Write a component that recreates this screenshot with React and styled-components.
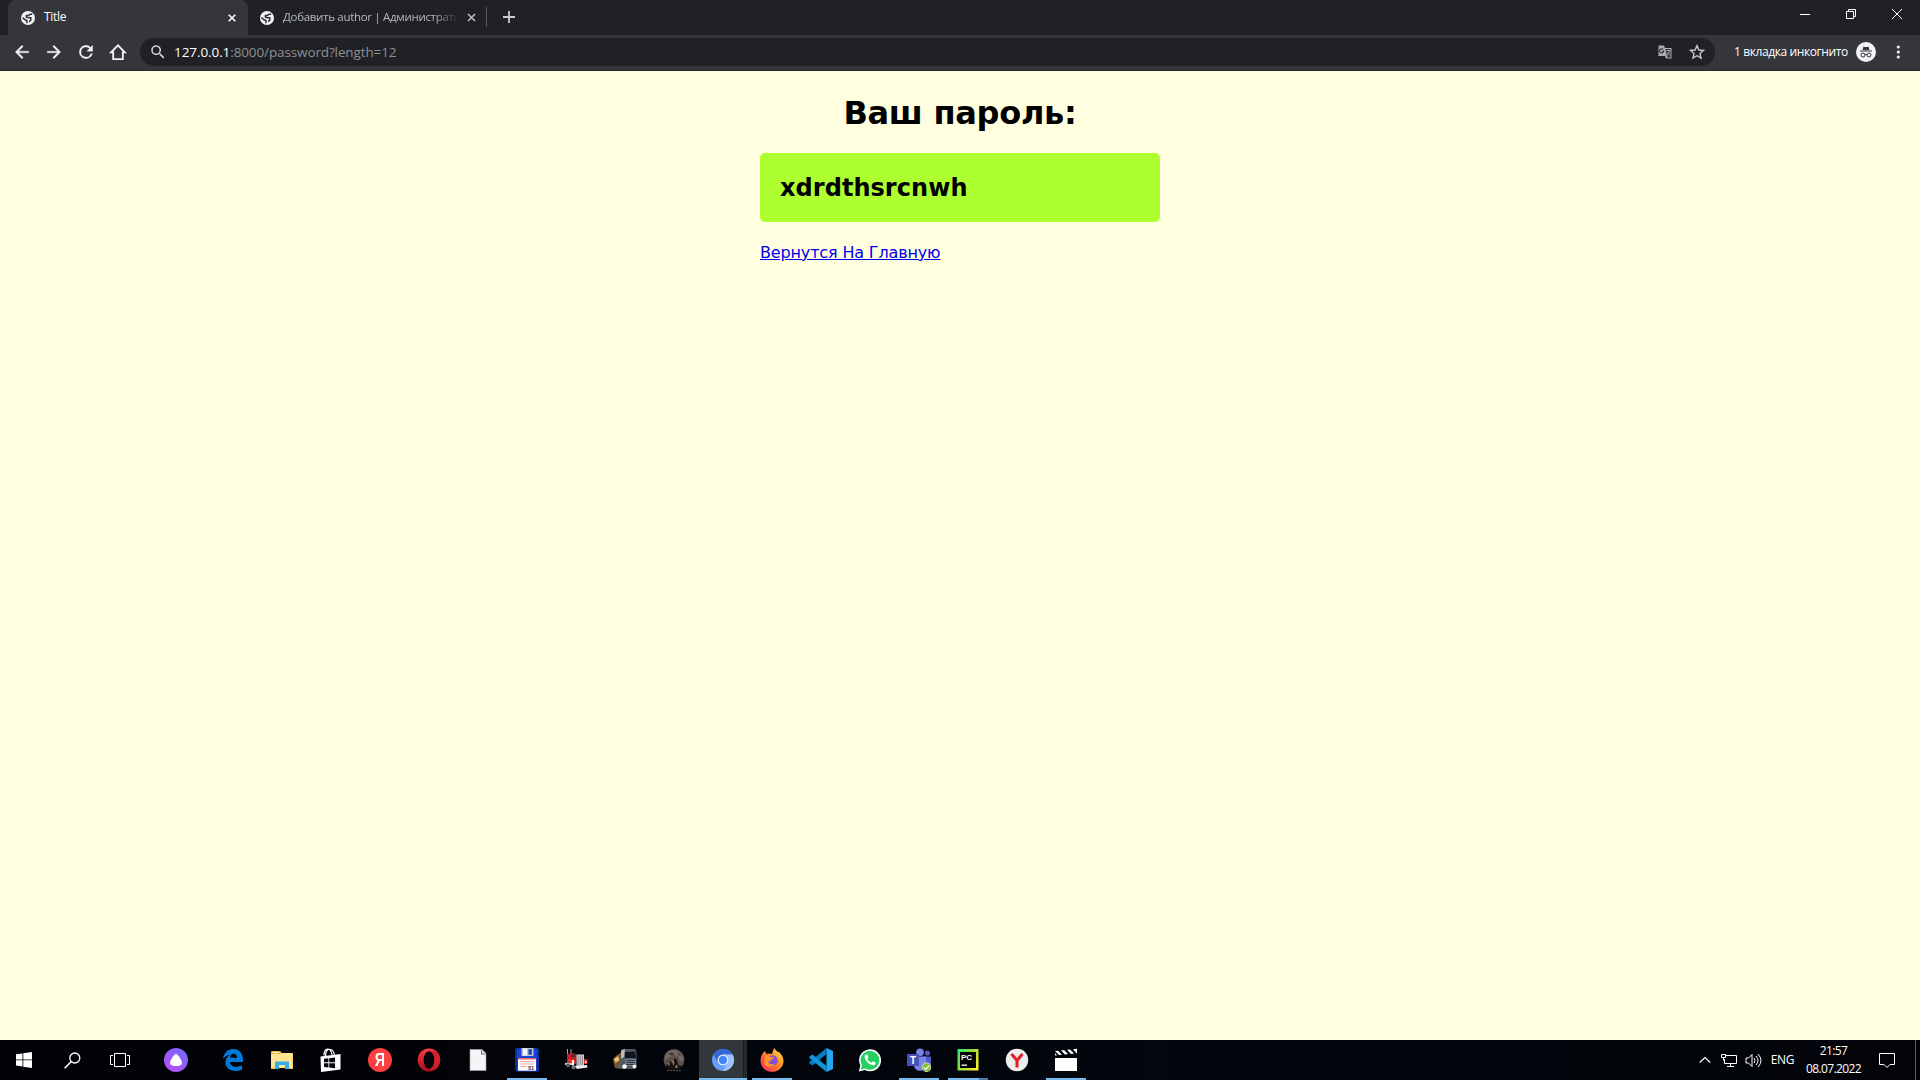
import React from "react";
import styled, { createGlobalStyle } from "styled-components";

const Global = createGlobalStyle`
  body { margin: 0; background: #ffffe0; overflow: hidden; }
`;
const Screen = styled.div`
  width: 1920px; height: 1080px; display: flex; flex-direction: column; background: #ffffe0;
`;
const TabStrip = styled.div`
  height: 35px; flex: none; background: #202124; display: flex; box-sizing: border-box; padding-left: 8px;
  font-family: "Open Sans", "Noto Sans", sans-serif; font-size: 12px;
`;
const Tab = styled.div`
  width: ${(p) => p.$w}px; box-sizing: border-box; height: 35px; flex: none; display: flex; align-items: center;
  padding: 0 ${(p) => p.$pr}px 0 ${(p) => p.$pl}px; color: ${(p) => (p.$active ? "#fff" : "#b4b8bd")};
  background: ${(p) => (p.$active ? "#35363a" : "transparent")}; border-radius: 8px 8px 0 0;
`;
const TabTitle = styled.span`
  flex: 1; min-width: 0; margin-left: 9px; padding-bottom: 2px; white-space: nowrap; line-height: 20px;
  font-size: ${(p) => p.$size}px; letter-spacing: ${(p) => p.$ls}px;
  ${(p) => p.$fade && "mask-image: linear-gradient(90deg, #000 86%, transparent 100%);"}
`;
const TabDivider = styled.i`
  width: 1px; height: 20px; background: #55575b; margin: 7px 15px 0 0;
`;
const NewTab = styled.div` padding-top: 10px; flex: 1; line-height: 0; `;
const WindowButtons = styled.div` display: flex; width: 138px; height: 28px; `;
const WinButton = styled.div` width: 46px; display: grid; place-items: center; `;
const Toolbar = styled.div`
  height: 36px; flex: none; box-sizing: border-box; background: #35363a; border-bottom: 1px solid #28292c;
  display: flex; align-items: center; padding: 0 0 1px 6px;
`;
const ToolButton = styled.div` width: 32px; height: 32px; flex: none; display: grid; place-items: center; `;
const Omnibox = styled.div`
  margin-left: 6px; width: 1575px; height: 28px; border-radius: 14px; background: #202124; box-sizing: border-box;
  display: flex; align-items: center; padding: 0 9px 0 9px; flex: none;
`;
const Url = styled.span`
  flex: 1; margin-left: 7px; color: #8d9094; font: 13.5px/20px "Open Sans", "Noto Sans", sans-serif; letter-spacing: -0.12px;
`;
const Host = styled.span` color: #fff; letter-spacing: -0.08px; `;
const OmniIcons = styled.div` display: flex; align-items: center; gap: 15px; `;
const Incognito = styled.div`
  margin-left: 19px; display: flex; align-items: center; color: #fff; white-space: nowrap;
  font: 12px/20px "Open Sans", "Noto Sans", sans-serif; letter-spacing: -0.4px;
`;
const IncognitoLabel = styled.span` width: 114px; margin-right: 8px; `;
const MenuDots = styled.div` margin-left: 12px; width: 20px; height: 20px; display: grid; place-items: center; `;
const Page = styled.main`
  flex: 1; font-family: Verdana, "DejaVu Sans", sans-serif; color: #000;
`;
const Column = styled.div` width: 400px; margin: 0 auto; `;
const Heading = styled.h1`
  margin: 23px 0 20px; font-size: 32px; line-height: 39px; text-align: center; letter-spacing: -0.27px;
  white-space: nowrap;
`;
const Password = styled.h2`
  margin: 0 0 21px; padding: 21px 20px 19px; height: 69px; box-sizing: border-box; line-height: 29px; font-size: 24px;
  letter-spacing: 0.05px; background: #adff2f; border-radius: 5px;
`;
const HomeLink = styled.a` color: #0000ee; font-size: 16px; line-height: 19px; letter-spacing: -0.15px; text-decoration: underline; `;
const Taskbar = styled.footer`
  height: 40px; flex: none; display: flex; color: #fff;
  background: linear-gradient(90deg, #010206, #02060d 60%, #020409);
`;
const taskBackground = (p) => {
  const layers = [];
  if (p.$split) layers.push("linear-gradient(#4a7ea8, #4a7ea8) 36px 100% / 9px 2px no-repeat");
  if (p.$line) layers.push(`linear-gradient(#76b9ed, #76b9ed) ${p.$active ? 0 : 5}px 100% / ${p.$line}px 2px no-repeat`);
  if (p.$active) layers.push("linear-gradient(90deg, #32373c 44px, #17191c 44px 45px, #25292d 45px)");
  return layers.join(", ") || "transparent";
};
const Task = styled.div`
  width: ${(p) => p.$w || 49}px; height: 40px; flex: none; box-sizing: border-box; display: grid; place-items: center;
  padding-left: ${(p) => (p.$w % 2 === 0 ? 0 : 1)}px; margin-left: ${(p) => p.$gap || 0}px;
  background: ${taskBackground};
`;
const Tray = styled.div`
  margin-left: auto; display: flex; align-items: center; font: 12px/18px "Open Sans", "Noto Sans", sans-serif; letter-spacing: -0.3px;
`;
const TrayItem = styled.div` width: ${(p) => p.$w}px; display: flex; justify-content: center; white-space: nowrap; `;
const Clock = styled.div` width: 67px; margin-right: 3px; text-align: center; white-space: nowrap; letter-spacing: -0.6px; `;
const ShowDesktop = styled.i` width: 4px; height: 40px; border-left: 1px solid #5b5d60; `;

const Svg = ({ s = 24, box = 24, children }) => (
  <svg width={s} height={s} viewBox={`0 0 ${box} ${box}`} fill="none">{children}</svg>
);
const Globe = () => (
  <Svg s={14} box={14}>
    <circle cx="7" cy="7" r="7" fill="#f1f3f4" />
    <path d="M11.300 3.200 9 3.300 7.600 4.600H5.400v1.600l2.200.6h2.200v2.300L8.200 10.700M1.500 6.600l2.700 2.200 1.700.7v2.700" stroke="#303134" strokeWidth="1.500" />
  </Svg>
);
const Close = ({ c }) => <Svg s={8} box={8}><path d="m.7.7 6.6 6.6m0-6.6L.7 7.3" stroke={c} strokeWidth="1.6" /></Svg>;
const arrow = "M20 11H7.83l5.59-5.59L12 4l-8 8 8 8 1.41-1.41L7.83 13H20z";

const Windows = () => <Svg s={16} box={16}><path fill="#fff" d="M0 2.3 6.5 1.4v6.1H0zM7.3 1.3 16 0v7.5H7.3zM0 8.3h6.5v6.2L0 13.6zM7.3 8.3H16V16l-8.7-1.3z" /></Svg>;
const Search = () => <Svg s={17} box={17}><circle cx="10.8" cy="6" r="5" stroke="#fff" strokeWidth="1.3" /><path d="M7.2 9.6.6 16.2" stroke="#fff" strokeWidth="1.5" /></Svg>;
const TaskView = () => <svg width="20" height="14" viewBox="0 0 20 14" fill="none" stroke="#fff"><path d="M4.5.5h11v13h-11zM3 2.5H.5v9H3M17 2.5h2.5v9H17" /></svg>;
const Alice = () => (
  <Svg><defs><linearGradient id="al" x1="1" y1="0" x2="0" y2="1"><stop stopColor="#6a6bff" /><stop offset="1" stopColor="#c14cf5" /></linearGradient></defs>
    <circle cx="12" cy="12" r="12" fill="url(#al)" /><path d="M12 6c1.800 0 6 6.200 6 8.900C18 17.200 14.500 18 12 18s-6-.8-6-3.100C6 12.200 10.200 6 12 6z" fill="#fff" /></Svg>
);
const Edge = () => <Svg><path fill="#0078d7" d="M2 11C2.800 4.500 7 1 12 1c6.500 0 10 4.800 10 10.500V14H9c.2 3.300 3 4.800 6.200 4.800 2.200 0 4.300-.6 5.800-1.500v4.200c-1.800 1-4 1.500-6.700 1.500C8.500 23 4.400 19.500 4.400 14.600c0-3.300 1.700-6.100 4.700-7.800C5.900 7.200 3.500 9 2 11zm7.100-1.200h6.800c0-2.500-1.200-4-3.300-4-1.900 0-3.100 1.500-3.500 4z" /></Svg>;
const Explorer = () => (
  <Svg><path d="M1 4q0-1 1-1h8l2 2h10q1 0 1 1v14H1z" fill="#e9b93f" /><path d="M1 6h9l2-1h10.500v15H1z" fill="#ffe394" /><path d="M2.500 4h6v1h-6z" fill="#fff" />
    <path d="M5 13.500h14V21h-4v-4H9v4H5z" fill="#35aee2" /><path d="M1 20h4v1H1zM19 20h4v1h-4z" fill="#e7bd52" /></Svg>
);
const Store = () => (
  <Svg><path d="m1.500 8.500 20-2.500v15.500L2 24z" fill="#fff" /><path d="M6.500 8c0-9 8-9 9 0M5 7.500C5-1 12-1 13 7" stroke="#fff" strokeWidth="1.200" />
    <path fill="#070a0f" d="M5 10.800 9.400 10.300v4H5zm5.200-.6 5.800-.7v4.800h-5.800zM5 15.200h4.400v4.200L5 18.900zm5.200 0H16v5l-5.800-.7z" /></Svg>
);
const YaText = styled.span`
  width: 24px; height: 24px; border-radius: 50%; background: #fc3f3f; color: #fff; text-align: center;
  font: bold 19px/24px "Liberation Sans", sans-serif;
`;
const Narrow = styled.span` display: inline-block; transform: scaleX(.75); `;
const Opera = () => (
  <Svg><defs><linearGradient id="op" x1="0" y1="0" x2="0" y2="1"><stop stopColor="#ff3a45" /><stop offset="1" stopColor="#a80c1b" /></linearGradient></defs>
    <ellipse cx="12" cy="12" rx="11.300" ry="11.500" fill="url(#op)" /><ellipse cx="12" cy="12" rx="5.300" ry="8.700" fill="#020408" /><path d="M13 3.200c3.500-1 6 0 7.800 2.800 2.900 4 2.700 9-.6 13-2 2.400-5 2.700-7.500 1.700 6.500-1 6.500-16.500.3-17.500z" fill="#d51e2e" /></Svg>
);
const FileIcon = () => <Svg><path d="M4 1.500h12l4 4v17H4z" fill="#f5f5f5" stroke="#aaa" strokeWidth=".6" /><path d="M15 1.500v5h5z" fill="#777" /><path d="M16 1.800v3.700h3.700z" fill="#ddd" /></Svg>;
const Floppy = () => (
  <Svg><path d="M.3 1Q.3.200 1.500.200h20.800l1.400 1.500V23.500H2L.3 22z" fill="#1644cf" /><path d="M1.500 1v22M22.500 2v21" stroke="#0a2b9d" />
    <path d="M6.500 0h12v8h-12z" fill="#b9c3d2" /><path d="M8 .5h4v7H8z" fill="#eff3f7" /><path d="M13.500 1.200h3.300v5.500h-3.300z" fill="#173eb9" />
    <path d="M3 10.500h18v12.200H3z" fill="#fff" /><path d="M3 10h18v1.500H3z" fill="#e66" /><path d="M5 13.500h14M5 16h14M5 18.500h7" stroke="#f08f8f" strokeWidth=".8" /><text x="13" y="21.500" fontSize="5" fontWeight="bold" fontFamily="Liberation Sans" fill="#333">S1</text></Svg>
);
const RedTruck = () => (
  <Svg><path d="M3.500 1v14M7 1v5" stroke="#a9a9a9" /><path d="M3 6 8 5l4 1 1 3-1 7H5l-2-2z" fill="#c41c20" /><path d="M7.500 6.500h4v2.500h-4z" fill="#3a3236" /><path d="m4 11 7 1v3l-7-1z" fill="#e8383a" />
    <path d="M1 15h9v2H1z" fill="#cfcfcf" /><circle cx="4" cy="17.500" r="2" fill="#55575a" /><circle cx="9.500" cy="19" r="2.200" fill="#74767a" />
    <path d="M12.500 6.500h7.500V18h-7.500z" fill="#d6d6d6" /><path d="M14 7.500v10M16.200 7.500v10M18.400 7.500v10" stroke="#777" strokeWidth=".9" /><path d="M20 11h3.500v5H20z" fill="#d32c30" /><path d="m11 18 12-1 .5 2.500L13 21z" fill="#eee" /><path d="M8 12h2v5H8zM21 13h1.500v2H21z" fill="#fff" /></Svg>
);
const GreyTruck = () => (
  <Svg><path d="M0 11 4 7l5-3v15l-8-2z" fill="#7d5528" /><path d="m1 11 4-3 1.500 4-4 3z" fill="#e8c075" /><path d="M8 3 10 1h12l1.500 2.500V18l-2 3H9l-2-3z" fill="#4c5763" /><path d="m8 2.500 4-1.500-1 8-3 2z" fill="#b9bcc0" /><path d="m12 4 10-.5 1 6.500H12z" fill="#11161d" />
    <path d="M12 11h11v7H12z" fill="#74818e" /><path d="M13 12.500h9M13 14.500h9M13 16.500h9" stroke="#2f3841" /><path d="m1 17 8 1v3l-7-1z" fill="#66594e" /><circle cx="11.500" cy="18.500" r="2.200" fill="#fff" /><circle cx="21.500" cy="18.500" r="2" fill="#fff7e0" /></Svg>
);
const Moon = () => (
  <Svg><circle cx="12" cy="11.500" r="10.500" fill="#5a514b" /><path d="M3 8 7 3l6-1 6 3-3 3-4-1-5 2-3 3zM16 8l4-1 2 4-4 3z" fill="#756a63" /><path d="m6 6 4-2 3 2-3 2zM15 4l3 2-1 2z" fill="#463e39" /><path d="M4 18 8 13l2 2 3-5 2 2 1 5 4 1-3 4H7z" fill="#15130f" /><path d="m6 16 1-2 1 2-1 2zm4-3 1.500-1 1 3-1 3zm4 4 2 1-1 2h-2z" fill="#a87a4b" /><path d="M5 22.500h14" stroke="#57514d" strokeDasharray="2 1" /></Svg>
);
const Chromium = () => (
  <Svg><circle cx="12" cy="12" r="11" fill="#669df6" /><path d="M2.400 6.500A11 11 0 0 1 21.600 6.500H12a5.500 5.500 0 0 0-5 7.500z" fill="#3367d6" /><path d="M21.600 6.500A11 11 0 0 1 12 23l5-9.500A5.500 5.500 0 0 0 12 6.500z" fill="#9ec1fa" /><circle cx="12" cy="12" r="5.400" fill="#e8f0fe" /><circle cx="12" cy="12" r="4.200" fill="#4285f4" /></Svg>
);
const Firefox = () => (
  <Svg><defs><linearGradient id="ff" x1="1" y1="0" x2="0" y2="1"><stop stopColor="#ffef3d" /><stop offset=".45" stopColor="#ff8a24" /><stop offset="1" stopColor="#f4156e" /></linearGradient></defs>
    <path d="M3 5 5 3l1.500 3 2-.5L12 6l2-6 3.500 4 .5-.5C21 5.500 23.500 9 23.500 13a11.500 10.800 0 0 1-23 0c0-3.500 1-6 2.500-8z" fill="url(#ff)" /><circle cx="12.500" cy="12.500" r="5.200" fill="#8150dc" /><path d="M5 8c3-1 4 0 5 1h4c0 2-2 2-3 2.800-.5 2-2 2.200-3 2 1.500 3 5 2.800 7 2-2 4-9 4-11 0z" fill="#ff9327" /></Svg>
);
const VSCode = () => <Svg><path d="M17.500 0 24 3v18l-6.500 3z" fill="#23a9f2" /><path d="M17.500 0v6L3.500 17.500.3 15.500V14z" fill="#087abf" /><path d="M17.500 24v-6L3.500 6.500.3 8.500V10z" fill="#1294db" /></Svg>;
const WhatsApp = () => <Svg><path d="M.8 23.500 2.400 17.600A11 11 0 1 1 6.800 22z" fill="#fff" /><path d="m2.800 21.500 1.200-4.200a9.400 9.400 0 1 1 3.200 3.100z" fill="#27cf64" /><path d="M8.300 6.500c-1 .2-1.800 1.200-1.600 2.800.5 4 5.300 8 8.600 8 1.700-.1 2.700-1.500 2.500-2.600L15 13.300l-1.500 1.500c-2-.8-3.300-2-4.200-4l1.200-1.200-1-2.800z" fill="#fff" /></Svg>;
const Teams = () => (
  <Svg><circle cx="13" cy="4.200" r="3.800" fill="#7b83eb" /><circle cx="20.500" cy="5" r="2.600" fill="#5059c9" /><path d="M16 8.500h8V16c0 4-5 5-8 2z" fill="#5059c9" /><path d="M7 8.500h12V17c0 7-11 8-12 1z" fill="#7b83eb" /><path d="M0 6h12v12H0z" fill="#4650b9" /><text x="3" y="15.500" fontSize="10" fontWeight="bold" fontFamily="Liberation Sans" fill="#fff">T</text><circle cx="19.500" cy="19.300" r="4.700" fill="#e9f5d5" /><circle cx="19.500" cy="19.300" r="4" fill="#86bd2e" /><path d="m17 19.300 2 2 3-3.600" stroke="#fff" strokeWidth="1.200" /></Svg>
);
const PyCharm = () => (
  <Svg><defs><linearGradient id="pc" x1="0" y1="0" x2="1" y2=".7"><stop stopColor="#1ff08c" /><stop offset=".4" stopColor="#80dd42" /><stop offset="1" stopColor="#f6ed28" /></linearGradient></defs>
    <path d="M1.500 1h21v21.500h-21z" fill="url(#pc)" /><path d="M4 4h16v16H4z" fill="#000" /><text x="5" y="12" fontSize="8" fontWeight="bold" fontFamily="Liberation Sans" fill="#fff">PC</text><path d="M5.500 16.500h5.500v1.300H5.500z" fill="#fff" /></Svg>
);
const YBrowser = () => <Svg><circle cx="12" cy="12" r="11.200" fill="#ededed" /><path d="m6.500 6 5.500 6.500L17.500 6M12 12v7.500" stroke="#e51e25" strokeWidth="3" /></Svg>;
const Clapper = () => <Svg><path d="M1 10h22v13H1z" fill="#fff" /><path d="m1 3 3-.3 4 4-3 .4zm6-.6 3-.4 4 4.100-3 .4zm6-.6 3-.4 4 4.100-3 .4zm6-.6 4-.4v5zM1 5l2 2.500H1z" fill="#fff" /></Svg>;

export default function App() {
  return (
    <Screen>
      <Global />
      <TabStrip>
        <Tab $active $w={240} $pl={13} $pr={12}>
          <Globe /><TabTitle $size={12} $ls={-0.3}>Title</TabTitle><Close c="#fff" />
        </Tab>
        <Tab $w={238} $pl={12} $pr={10}>
          <Globe /><TabTitle $size={11.5} $ls={-0.31} $fade>Добавить author | Администрати</TabTitle><Svg s={17} box={17}><path d="m9 5 7 7m0-7-7 7" stroke="#b9bcc0" strokeWidth="1.6" /></Svg>
        </Tab>
        <TabDivider />
        <NewTab><Svg s={14} box={14}><path d="M7 1v12M1 7h12" stroke="#c8cbcf" strokeWidth="1.8" /></Svg></NewTab>
        <WindowButtons>
          <WinButton><Svg s={10} box={10}><path d="M0 5.500h10" stroke="#fff" /></Svg></WinButton>
          <WinButton><Svg s={10} box={10}><path d="M.5 2.500h7v7h-7zM2.500 2.500v-2h7v7h-2" stroke="#fff" /></Svg></WinButton>
          <WinButton><Svg s={10} box={10}><path d="m0 0 10 10M10 0 0 10" stroke="#fff" /></Svg></WinButton>
        </WindowButtons>
      </TabStrip>
      <Toolbar>
        <ToolButton><Svg s={20}><path d={arrow} fill="#f1f3f4" stroke="#f1f3f4" strokeWidth=".4" /></Svg></ToolButton>
        <ToolButton><Svg s={20}><path d={arrow} fill="#f1f3f4" stroke="#f1f3f4" strokeWidth=".4" transform="matrix(-1 0 0 1 24 0)" /></Svg></ToolButton>
        <ToolButton><Svg s={20}><path fill="#f1f3f4" stroke="#f1f3f4" strokeWidth=".4" d="M17.650 6.350A7.960 7.960 0 0 0 12 4a8 8 0 1 0 7.730 10h-2.080A6 6 0 1 1 12 6c1.660 0 3.140.69 4.220 1.780L13 11h7V4z" /></Svg></ToolButton>
        <ToolButton><Svg s={20}><path d="M3.800 12.300 12 4l8.200 8.300H17.800v8.200H6.200v-8.200z" stroke="#f1f3f4" strokeWidth="2.200" /></Svg></ToolButton>
        <Omnibox>
          <Svg s={18}><path fill="#d8dadd" d="M15.500 14h-.79l-.28-.27A6.500 6.500 0 1 0 13.730 14.430l.27.28v.79l5 5L20.490 19zm-6 0a4.500 4.500 0 1 1 0-9 4.500 4.500 0 0 1 0 9z" /></Svg>
          <Url><Host>127.0.0.1</Host>:8000/password?length=12</Url>
          <OmniIcons>
            <Svg s={16} box={16}><path d="M1.500 1.500H7l1 2.500h6.500v10.500H9L8 12H1.500z" fill="#a9abae" /><path d="M8.500 5h5v8.500H10l1-2H9.800z" fill="#303134" /><path d="M6.200 5.600A2.100 2.100 0 1 0 6.600 7.300H4.800" stroke="#303134" strokeWidth="1.100" /><path d="M9.500 6.500h4M11.500 5.700v.8m1.200.2c-.5 2-1.500 3-2.500 4m0-2.500c.7 1.500 1.600 2.300 2.800 3" stroke="#a9abae" strokeWidth=".9" /></Svg>
            <Svg s={18}><path d="m12 3.500 2.500 5.800 6.200.6-4.700 4.200 1.400 6.100-5.400-3.200-5.400 3.200L8 14.100 3.300 9.900l6.200-.6z" stroke="#c4c6c8" strokeWidth="1.900" /></Svg>
          </OmniIcons>
        </Omnibox>
        <Incognito>
          <IncognitoLabel>1 вкладка инкогнито</IncognitoLabel>
          <Svg s={20} box={20}><circle cx="10" cy="10" r="10" fill="#f1f3f4" /><path d="m6.500 8 1-3.500q2.500 1 5 0l1 3.500zM4 8.500h12v1H4z" fill="#35363a" /><circle cx="7" cy="13" r="2" stroke="#35363a" /><circle cx="13" cy="13" r="2" stroke="#35363a" /><path d="M9 12.700q1-.6 2 0" stroke="#35363a" /></Svg>
          <MenuDots><Svg s={16} box={16}><circle cx="8.300" cy="3" r="1.600" fill="#f1f3f4" /><circle cx="8.300" cy="8" r="1.600" fill="#f1f3f4" /><circle cx="8.300" cy="13" r="1.600" fill="#f1f3f4" /></Svg></MenuDots>
        </Incognito>
      </Toolbar>
      <Page>
        <Column>
          <Heading>Ваш пароль:</Heading>
          <Password>xdrdthsrcnwh</Password>
          <HomeLink>Вернутся На Главную</HomeLink>
        </Column>
      </Page>
      <Taskbar>
        <Task $w={48}><Windows /></Task>
        <Task $w={48}><Search /></Task>
        <Task $w={48}><TaskView /></Task>
        <Task $w={64}><Alice /></Task>
        <Task $w={50}><Edge /></Task>
        <Task $w={48}><Explorer /></Task>
        <Task><Store /></Task>
        <Task><YaText><Narrow>Я</Narrow></YaText></Task>
        <Task><Opera /></Task>
        <Task><FileIcon /></Task>
        <Task $line={40}><Floppy /></Task>
        <Task><RedTruck /></Task>
        <Task><GreyTruck /></Task>
        <Task><Moon /></Task>
        <Task $w={48} $gap={1} $active $line={48}><Chromium /></Task>
        <Task $line={40}><Firefox /></Task>
        <Task><VSCode /></Task>
        <Task><WhatsApp /></Task>
        <Task $line={40}><Teams /></Task>
        <Task $line={40} $split><PyCharm /></Task>
        <Task><YBrowser /></Task>
        <Task $line={40}><Clapper /></Task>
        <Tray>
          <TrayItem $w={24}><svg width="12" height="8" viewBox="0 0 12 8" fill="none"><path d="m.7 6.500 5.300-5 5.300 5" stroke="#fff" strokeWidth="1.200" /></svg></TrayItem>
          <TrayItem $w={24}><Svg s={16} box={16}><path d="M5 3.500h10.500v8h-12V7M9.500 11.500v3M6 14.500h7M.5 2.500h4v3h-4zM2.500 5.500v3" stroke="#fff" /></Svg></TrayItem>
          <TrayItem $w={24}><Svg s={17} box={17}><path d="M1 6h2.500L7 2.500v12L3.500 11H1zM9 6q2 2.500 0 5M11 4q4 4.500 0 9M13 2q6 6.500 0 13" stroke="#fff" /></Svg></TrayItem>
          <TrayItem $w={35}>ENG</TrayItem>
          <Clock>21:57<br />08.07.2022</Clock>
          <TrayItem $w={34}><Svg s={16} box={16}><path d="M.5 1.500h15v11h-4.500l-3 3-3-3H.5z" stroke="#fff" /></Svg></TrayItem>
          <TrayItem $w={11} />
          <ShowDesktop />
        </Tray>
      </Taskbar>
    </Screen>
  );
}
